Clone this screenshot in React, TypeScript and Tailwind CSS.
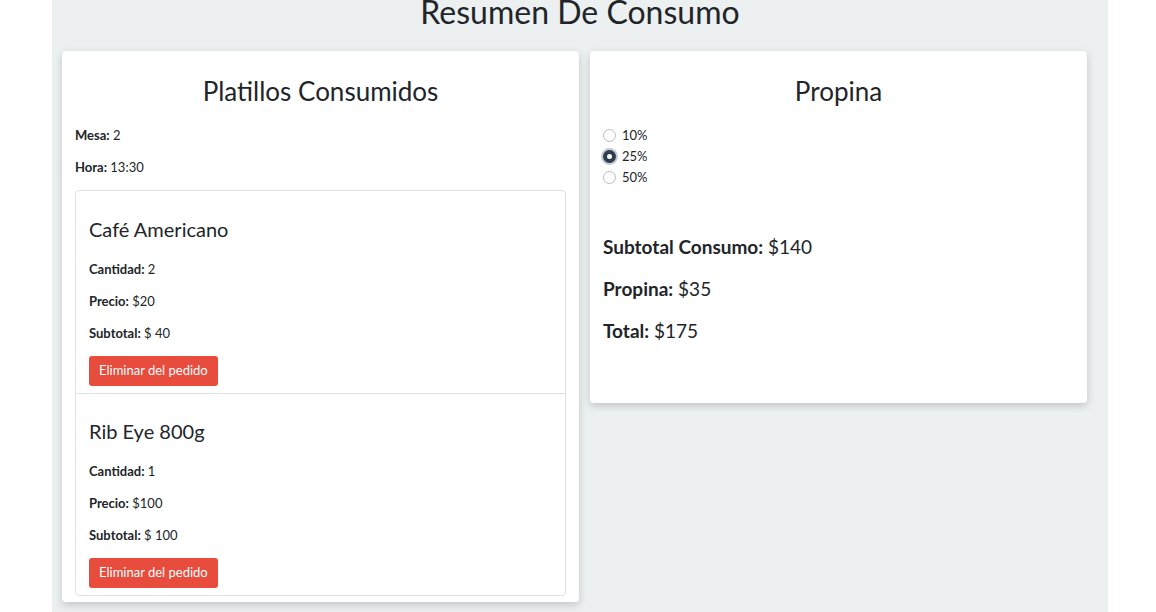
import React from "react"

const platillos = [
  { nombre: "Café Americano", cantidad: 2, precio: 20 },
  { nombre: "Rib Eye 800g", cantidad: 1, precio: 100 },
]

const opciones = ["10%", "25%", "50%"]

function Radio({ checked }: { checked: boolean }) {
  if (checked) {
    return (
      <span className="flex h-[13px] w-[13px] items-center justify-center rounded-full bg-[#2c3e50] shadow-[0_0_0_2px_#c5cbd1]">
        <span className="h-[5px] w-[5px] rounded-full bg-white"></span>
      </span>
    )
  }
  return <span className="h-[13px] w-[13px] rounded-full border border-[#b8bcc0] bg-white"></span>
}

export default function App() {
  const subtotal = platillos.reduce((acc, p) => acc + p.cantidad * p.precio, 0)
  const propina = subtotal * 0.25

  return (
    <div className="min-h-screen bg-white font-['Lato',_'Open_Sans',_sans-serif] text-[#212529]">
      <div className="ml-[52px] min-h-[612px] w-[1056px] overflow-hidden bg-[#ecf0f1]">
        {/* Header */}
        <h1 className="-mt-[7px] text-center text-[32px] leading-[38px] font-normal">Resumen De Consumo</h1>

        <div className="mt-5 flex items-start gap-[11px] pl-[10px]">
          {/* Platillos */}
          <div className="w-[517px] rounded-[4px] bg-white px-[13px] pt-[24px] pb-[6px] shadow-[0_3px_8px_rgba(0,0,0,0.18)]">
            <h3 className="text-center text-[26px] leading-[32px] font-normal">Platillos Consumidos</h3>
            <p className="mt-[18px] text-[13px] leading-[20px]">
              <strong className="font-bold">Mesa:</strong> 2
            </p>
            <p className="mt-[12px] text-[13px] leading-[20px]">
              <strong className="font-bold">Hora:</strong> 13:30
            </p>

            <div className="mt-[13px] rounded-[4px] border border-[#dee2e6]">
              {platillos.map((p, i) => (
                <div
                  key={p.nombre}
                  className={"px-[13px] pb-[7px] " + (i > 0 ? "border-t border-[#dee2e6] pt-[25px]" : "pt-[26px]")}
                >
                  <h4 className="text-[20px] leading-[24px] font-normal">{p.nombre}</h4>
                  <p className="mt-[18px] text-[13px] leading-[20px]">
                    <strong className="font-bold">Cantidad:</strong> {p.cantidad}
                  </p>
                  <p className="mt-[12px] text-[13px] leading-[20px]">
                    <strong className="font-bold">Precio:</strong> ${p.precio}
                  </p>
                  <p className="mt-[12px] text-[13px] leading-[20px]">
                    <strong className="font-bold">Subtotal:</strong> $ {p.cantidad * p.precio}
                  </p>
                  <button className="mt-[13px] h-[30px] rounded-[3px] bg-[#e74c3c] px-[10px] text-[13px] text-white">
                    Eliminar del pedido
                  </button>
                </div>
              ))}
            </div>
          </div>

          {/* Propina */}
          <div className="w-[497px] rounded-[4px] bg-white px-[13px] pt-[24px] pb-[60px] shadow-[0_3px_8px_rgba(0,0,0,0.18)]">
            <h3 className="text-center text-[26px] leading-[32px] font-normal">Propina</h3>
            <div className="mt-[18px] flex flex-col">
              {opciones.map((o) => (
                <label key={o} className="flex h-[21px] items-center gap-[6px] text-[13px]">
                  <Radio checked={o === "25%"} />
                  <span>{o}</span>
                </label>
              ))}
            </div>

            <div className="mt-[47px] flex flex-col gap-[18px] text-[19px] leading-[24px]">
              <p>
                <strong className="font-bold">Subtotal Consumo:</strong> ${subtotal}
              </p>
              <p>
                <strong className="font-bold">Propina:</strong> ${propina}
              </p>
              <p>
                <strong className="font-bold">Total:</strong> ${subtotal + propina}
              </p>
            </div>
          </div>
        </div>
      </div>
    </div>
  )
}
